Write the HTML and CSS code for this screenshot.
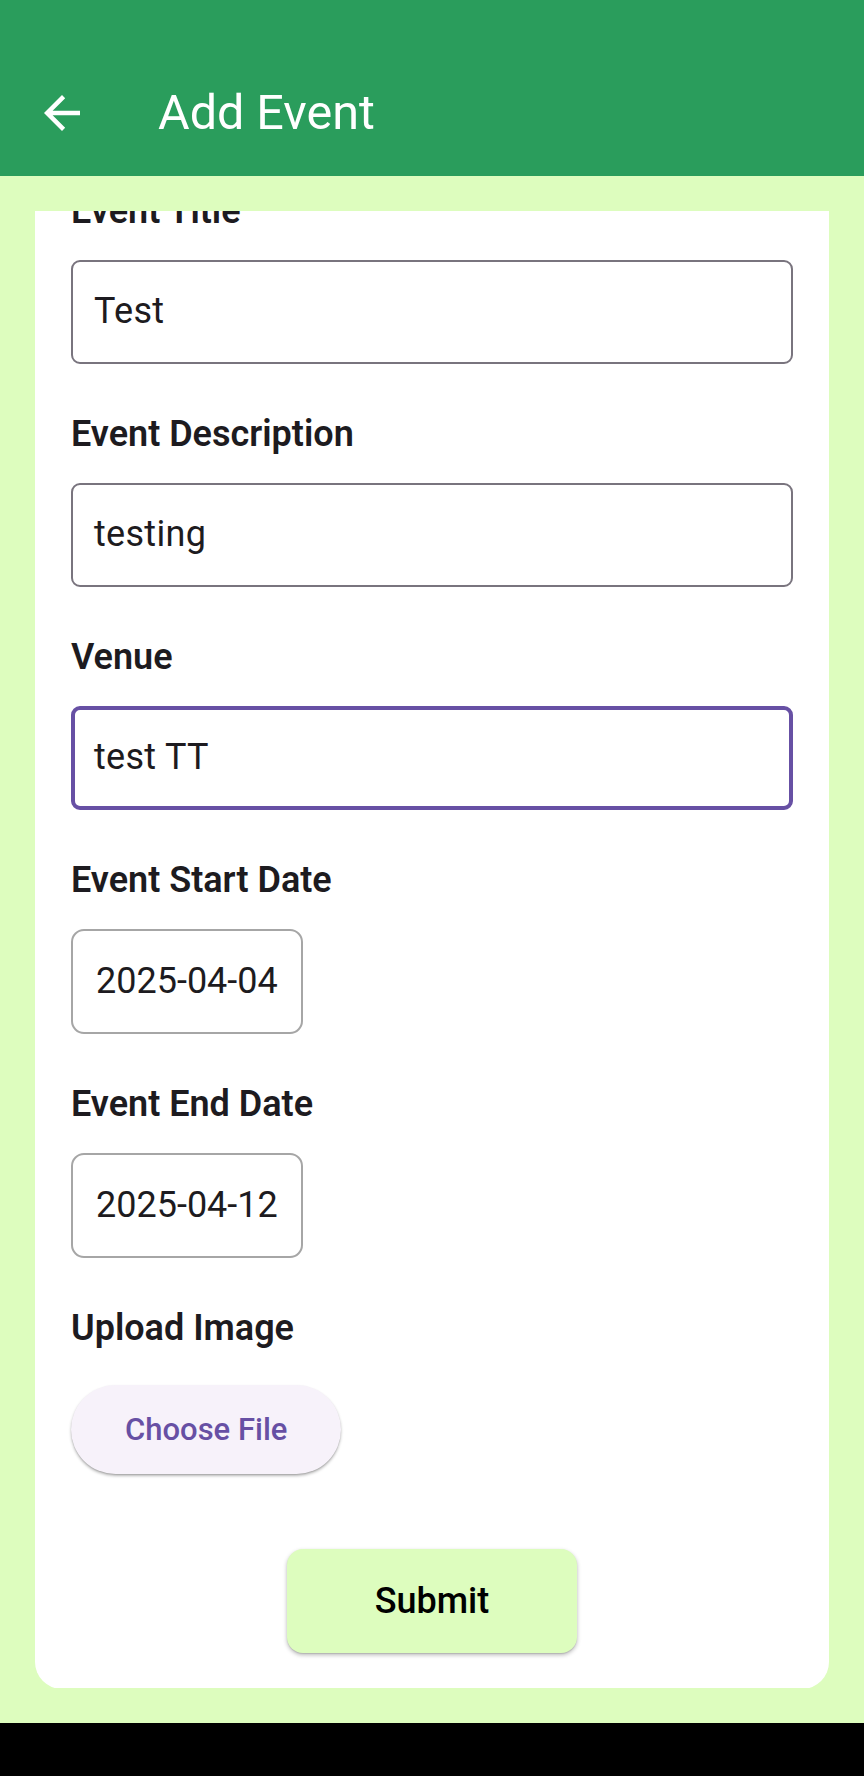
FILE: index.html
```html
<!DOCTYPE html>
<html lang="en">
<head>
<meta charset="utf-8">
<title>Add Event</title>
<link rel="stylesheet" href="styles.css">
</head>
<body>
<div class="screen">
  <header class="appbar">
    <svg class="back" viewBox="0 0 24 24" width="54" height="54" aria-hidden="true">
      <path d="M20 11H7.83l5.59-5.59L12 4l-8 8 8 8 1.41-1.41L7.83 13H20v-2z" fill="#ffffff"/>
    </svg>
    <h1 class="title">Add Event</h1>
  </header>
  <main class="content">
    <div class="viewport">
      <div class="card">
        <div class="group">
          <div class="label">Event Title</div>
          <div class="field">Test</div>
        </div>
        <div class="group">
          <div class="label">Event Description</div>
          <div class="field">testing</div>
        </div>
        <div class="group">
          <div class="label">Venue</div>
          <div class="field focused">test TT</div>
        </div>
        <div class="group">
          <div class="label">Event Start Date</div>
          <div class="date">2025-04-04</div>
        </div>
        <div class="group">
          <div class="label">Event End Date</div>
          <div class="date">2025-04-12</div>
        </div>
        <div class="group upload">
          <div class="label label-upload">Upload Image</div>
          <button class="choose" type="button">Choose File</button>
        </div>
        <div class="actions">
          <button class="submit" type="button">Submit</button>
        </div>
      </div>
    </div>
  </main>
  <div class="navbar"></div>
</div>
</body>
</html>
```

FILE: styles.css
```css
* { box-sizing: border-box; }
html, body { margin: 0; padding: 0; }
body {
  font-family: Roboto, "Noto Sans", "Liberation Sans", sans-serif;
  background: #000;
}
.screen {
  width: 864px;
  height: 1776px;
  display: flex;
  flex-direction: column;
  overflow: hidden;
}
.appbar {
  height: 176px;
  flex: none;
  background: #2a9d5c;
  display: flex;
  align-items: center;
  padding-top: 50px;
}
.back {
  display: block;
  margin-left: 35px;
  flex: none;
}
.title {
  margin: 0 0 0 69px;
  font-weight: 400;
  font-size: 48.5px;
  line-height: 60px;
  color: #ffffff;
}
.content {
  flex: none;
  height: 1547px;
  background: #ddfdbe;
  padding: 35px;
}
.viewport {
  height: 100%;
  overflow: hidden;
}
.card {
  margin-top: -57px;
  background: #ffffff;
  border-radius: 27px;
  padding: 36px;
}
.group { margin-bottom: 49px; }
.group.upload { margin-bottom: 0; }
.label {
  font-size: 36px;
  font-weight: 600;
  line-height: 42px;
  color: #1d1b20;
  margin-bottom: 28px;
}
.label-upload { margin-bottom: 36px; }
.field {
  height: 104px;
  border: 2px solid #79747e;
  border-radius: 9px;
  display: flex;
  align-items: center;
  padding: 0 21px 2px;
  font-size: 36px;
  color: #1d1b20;
  letter-spacing: 0.3px;
}
.field.focused {
  border: 4px solid #6750a4;
  padding: 0 19px 2px;
}
.date {
  display: inline-flex;
  align-items: center;
  height: 105px;
  border: 2px solid #a6a6a6;
  border-radius: 13px;
  padding: 0 23px 2px;
  font-size: 36px;
  color: #1d1b20;
}
.choose {
  display: block;
  height: 89px;
  padding: 0 54px;
  border: none;
  border-radius: 45px;
  background: #f7f2fa;
  color: #6750a4;
  font-family: inherit;
  font-size: 31px;
  font-weight: 500;
  box-shadow: 0 2px 3px rgba(0,0,0,0.28), 0 1px 1px rgba(0,0,0,0.1);
}
.actions {
  display: flex;
  justify-content: center;
  margin-top: 75px;
}
.submit {
  width: 290px;
  height: 104px;
  border: none;
  border-radius: 16px;
  background: #ddfdbe;
  color: #000000;
  font-family: inherit;
  font-size: 36px;
  font-weight: 500;
  box-shadow: 0 2px 4px rgba(0,0,0,0.28), 0 1px 1px rgba(0,0,0,0.1);
}
.navbar {
  flex: 1;
  background: #000;
}
```
